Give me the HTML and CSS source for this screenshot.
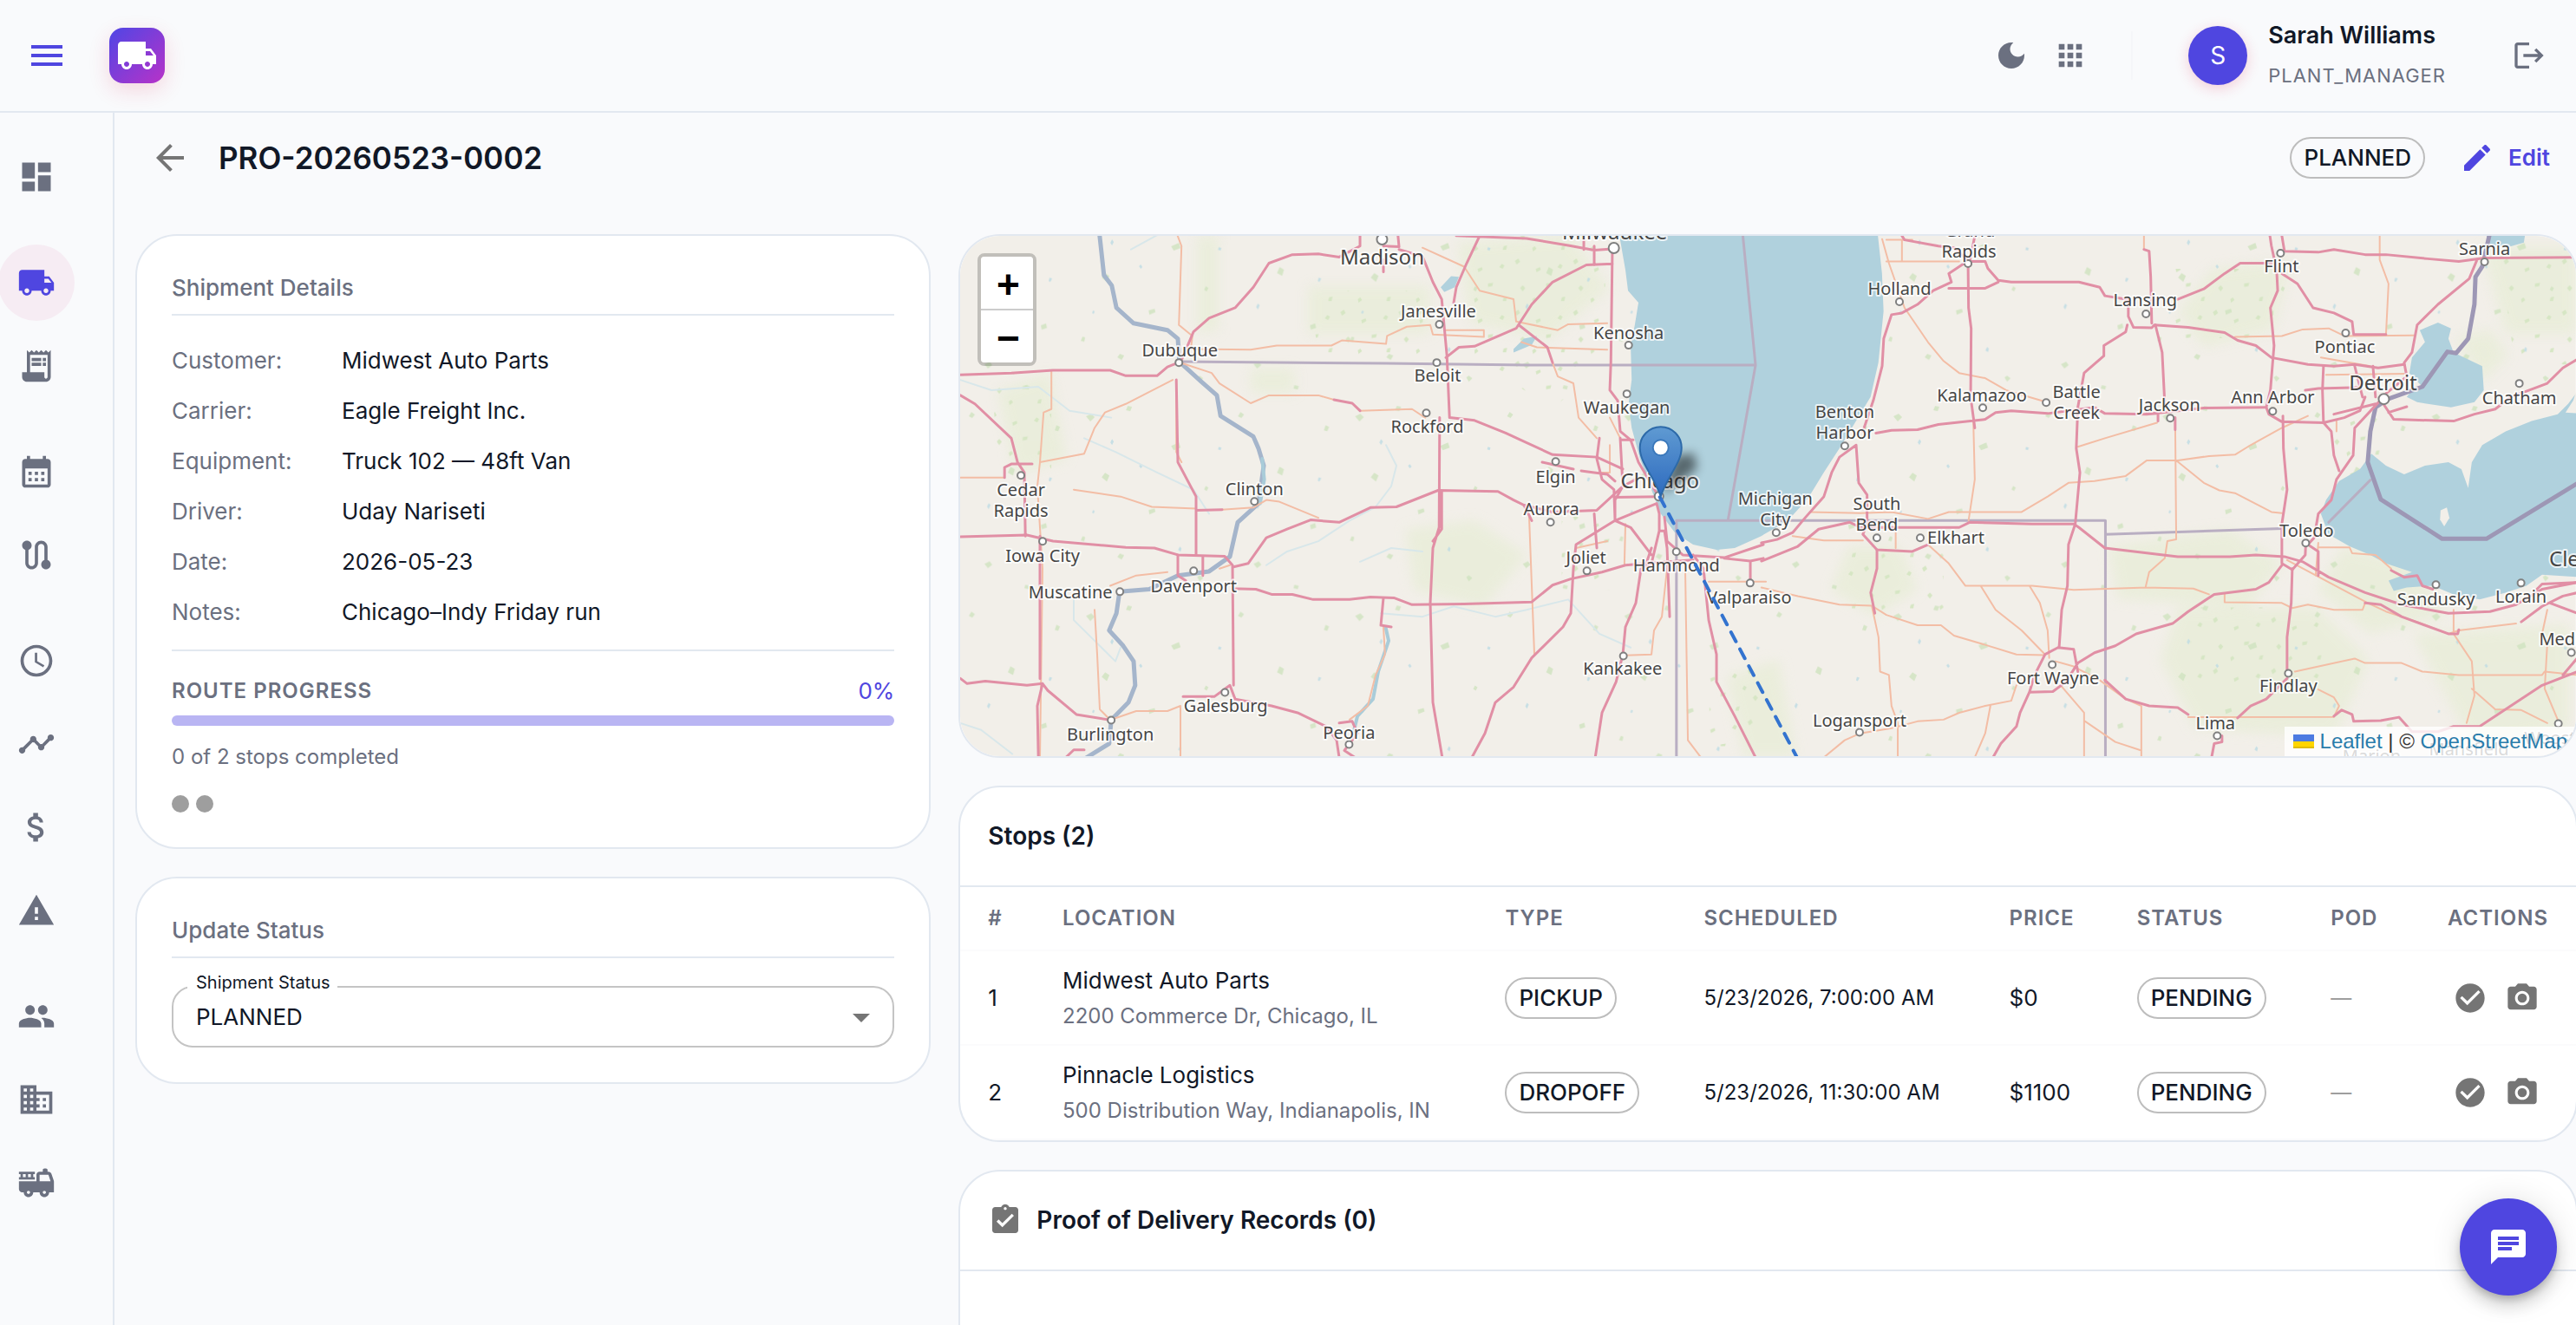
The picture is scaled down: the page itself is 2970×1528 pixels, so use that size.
FILE: index.html
```html
<!DOCTYPE html>
<html lang="en">
<head>
<meta charset="utf-8">
<title>PRO-20260523-0002</title>
<meta name="viewport" content="width=device-width, initial-scale=1">
<link rel="stylesheet" href="styles.css">
</head>
<body>
<svg class="sprite" aria-hidden="true">
  <symbol id="i-truck" viewBox="0 0 24 24"><path d="M20 8h-3V4H3c-1.100 0-2 .9-2 2v11h2c0 1.660 1.340 3 3 3s3-1.340 3-3h6c0 1.660 1.340 3 3 3s3-1.340 3-3h2v-5l-3-4zM6 18.500c-.83 0-1.500-.67-1.500-1.500s.67-1.500 1.500-1.500 1.500.67 1.500 1.500-.67 1.500-1.500 1.500zm13.500-9l1.960 2.500H17V9.500h2.500zm-1.500 9c-.83 0-1.500-.67-1.500-1.500s.67-1.500 1.500-1.500 1.500.67 1.500 1.500-.67 1.500-1.500 1.500z"/></symbol>
  <symbol id="i-check" viewBox="0 0 24 24"><path d="M12 2C6.480 2 2 6.480 2 12s4.480 10 10 10 10-4.480 10-10S17.520 2 12 2zm-2 15l-5-5 1.410-1.410L10 14.170l7.590-7.590L19 8l-9 9z"/></symbol>
  <symbol id="i-camera" viewBox="0 0 24 24"><path d="M9 2L7.170 4H4c-1.100 0-2 .9-2 2v12c0 1.100.9 2 2 2h16c1.100 0 2-.9 2-2V6c0-1.100-.9-2-2-2h-3.170L15 2H9zm3 15c-2.760 0-5-2.240-5-5s2.240-5 5-5 5 2.240 5 5-2.240 5-5 5z"/><circle cx="12" cy="12" r="3.200"/></symbol>
</svg>

<header class="topbar">
  <button class="icon-btn menu-btn" type="button" aria-label="Menu"><svg class="icon-lg" viewBox="0 0 24 24"><path d="M3 18h18v-2H3v2zm0-5h18v-2H3v2zm0-7v2h18V6H3z"/></svg></button>
  <a class="logo" href="#" aria-label="Home"><svg class="icon-lg"><use href="#i-truck"/></svg></a>
  <div class="topbar-tools">
    <button class="icon-btn tool-btn" type="button" aria-label="Dark mode"><svg class="icon" viewBox="0 0 24 24"><path d="M12 3c-4.970 0-9 4.030-9 9s4.030 9 9 9 9-4.030 9-9c0-.46-.04-.92-.1-1.360-.98 1.370-2.580 2.260-4.400 2.260-2.980 0-5.400-2.420-5.400-5.400 0-1.810.89-3.420 2.260-4.400-.44-.06-.9-.1-1.360-.1z"/></svg></button>
    <button class="icon-btn tool-btn" type="button" aria-label="Apps"><svg class="icon" viewBox="0 0 24 24"><path d="M4 8h4V4H4v4zm6 12h4v-4h-4v4zm-6 0h4v-4H4v4zm0-6h4v-4H4v4zm6 0h4v-4h-4v4zm6-10v4h4V4h-4zm-6 4h4V4h-4v4zm6 6h4v-4h-4v4zm0 6h4v-4h-4v4z"/></svg></button>
  </div>
  <span class="topbar-divider"></span>
  <div class="user">
    <span class="avatar">S</span>
    <div class="user-text">
      <span class="user-name">Sarah Williams</span>
      <span class="user-role">PLANT_MANAGER</span>
    </div>
  </div>
  <button class="icon-btn tool-btn" type="button" aria-label="Log out"><svg class="icon" viewBox="0 0 24 24"><path d="M17 7l-1.410 1.410L18.170 11H8v2h10.170l-2.580 2.580L17 17l5-5zM4 5h8V3H4c-1.100 0-2 .9-2 2v14c0 1.100.9 2 2 2h8v-2H4V5z"/></svg></button>
</header>

<div class="shell">
  <nav class="sidebar" aria-label="Main">
    <div class="nav-group">
      <a class="nav-item" href="#" aria-label="Dashboard"><svg viewBox="0 0 24 24"><path d="M3 13h8V3H3v10zm0 8h8v-6H3v6zm10 0h8V11h-8v10zm0-18v6h8V3h-8z"/></svg></a>
    </div>
    <div class="nav-group">
      <a class="nav-item active" href="#" aria-label="Shipments"><svg><use href="#i-truck"/></svg></a>
      <a class="nav-item" href="#" aria-label="Orders"><svg viewBox="0 0 24 24"><path d="M19.500 3.500L18 2l-1.500 1.500L15 2l-1.500 1.500L12 2l-1.500 1.500L9 2 7.500 3.500 6 2v14H3v3c0 1.660 1.340 3 3 3h12c1.660 0 3-1.340 3-3V2l-1.500 1.500zM19 19c0 .55-.45 1-1 1s-1-.45-1-1v-3H8V5h11v14z"/><path d="M9 7h6v2H9zm7 0h2v2h-2zM9 10h6v2H9zm7 0h2v2h-2z"/></svg></a>
    </div>
    <div class="nav-group">
      <a class="nav-item" href="#" aria-label="Calendar"><svg viewBox="0 0 24 24"><path d="M19 4h-1V2h-2v2H8V2H6v2H5c-1.110 0-1.990.9-1.990 2L3 20c0 1.100.89 2 2 2h14c1.100 0 2-.9 2-2V6c0-1.100-.9-2-2-2zm0 16H5V10h14v10zM9 14H7v-2h2v2zm4 0h-2v-2h2v2zm4 0h-2v-2h2v2zm-8 4H7v-2h2v2zm4 0h-2v-2h2v2zm4 0h-2v-2h2v2z"/></svg></a>
      <a class="nav-item" href="#" aria-label="Routes"><svg viewBox="0 0 24 24"><path d="M19 15.180V7c0-2.210-1.790-4-4-4s-4 1.790-4 4v10c0 1.100-.9 2-2 2s-2-.9-2-2V8.820C8.160 8.400 9 7.300 9 6c0-1.660-1.340-3-3-3S3 4.340 3 6c0 1.300.84 2.400 2 2.820V17c0 2.210 1.790 4 4 4s4-1.790 4-4V7c0-1.100.9-2 2-2s2 .9 2 2v8.180c-1.160.41-2 1.510-2 2.820 0 1.660 1.340 3 3 3s3-1.340 3-3c0-1.300-.84-2.400-2-2.820z"/></svg></a>
    </div>
    <div class="nav-group">
      <a class="nav-item" href="#" aria-label="Schedule"><svg viewBox="0 0 24 24"><path d="M11.990 2C6.470 2 2 6.480 2 12s4.470 10 9.990 10C17.520 22 22 17.520 22 12S17.520 2 11.990 2zM12 20c-4.420 0-8-3.580-8-8s3.580-8 8-8 8 3.580 8 8-3.580 8-8 8z"/><path d="M12.500 7H11v6l5.250 3.150.75-1.230-4.500-2.670z"/></svg></a>
      <a class="nav-item" href="#" aria-label="Analytics"><svg viewBox="0 0 24 24"><path d="M23 8c0 1.100-.9 2-2 2-.18 0-.35-.02-.51-.07l-3.560 3.550c.05.16.07.34.07.52 0 1.100-.9 2-2 2s-2-.9-2-2c0-.18.02-.36.07-.52l-2.550-2.550c-.16.05-.34.07-.52.07s-.36-.02-.52-.07l-4.550 4.560c.05.16.07.33.07.51 0 1.100-.9 2-2 2s-2-.9-2-2 .9-2 2-2c.18 0 .35.02.51.07l4.560-4.550C8.020 9.360 8 9.180 8 9c0-1.100.9-2 2-2s2 .9 2 2c0 .18-.02.36-.07.52l2.550 2.550c.16-.05.34-.07.52-.07s.36.02.52.07l3.550-3.560C19.020 8.350 19 8.180 19 8c0-1.100.9-2 2-2s2 .9 2 2z"/></svg></a>
      <a class="nav-item" href="#" aria-label="Billing"><svg viewBox="0 0 24 24"><path d="M11.800 10.900c-2.270-.59-3-1.200-3-2.150 0-1.090 1.010-1.850 2.700-1.850 1.780 0 2.440.85 2.500 2.100h2.210c-.07-1.720-1.120-3.300-3.210-3.810V3h-3v2.160c-1.940.42-3.500 1.680-3.500 3.610 0 2.310 1.910 3.460 4.700 4.130 2.500.6 3 1.480 3 2.410 0 .69-.49 1.790-2.700 1.790-2.060 0-2.870-.92-2.980-2.100h-2.200c.12 2.190 1.760 3.420 3.680 3.830V21h3v-2.150c1.950-.37 3.500-1.500 3.500-3.550 0-2.840-2.430-3.810-4.700-4.400z"/></svg></a>
      <a class="nav-item" href="#" aria-label="Alerts"><svg viewBox="0 0 24 24"><path d="M1 21h22L12 2 1 21zm12-3h-2v-2h2v2zm0-4h-2v-4h2v4z"/></svg></a>
    </div>
    <div class="nav-group">
      <a class="nav-item" href="#" aria-label="Users"><svg viewBox="0 0 24 24"><path d="M16 11c1.660 0 2.990-1.340 2.990-3S17.660 5 16 5c-1.660 0-3 1.340-3 3s1.340 3 3 3zm-8 0c1.660 0 2.990-1.340 2.990-3S9.660 5 8 5C6.340 5 5 6.340 5 8s1.340 3 3 3zm0 2c-2.330 0-7 1.170-7 3.500V19h14v-2.500c0-2.330-4.670-3.500-7-3.500zm8 0c-.29 0-.62.02-.97.05 1.160.84 1.970 1.970 1.970 3.450V19h6v-2.500c0-2.330-4.670-3.500-7-3.500z"/></svg></a>
      <a class="nav-item" href="#" aria-label="Companies"><svg viewBox="0 0 24 24"><path d="M12 7V3H2v18h20V7H12zM6 19H4v-2h2v2zm0-4H4v-2h2v2zm0-4H4V9h2v2zm0-4H4V5h2v2zm4 12H8v-2h2v2zm0-4H8v-2h2v2zm0-4H8V9h2v2zm0-4H8V5h2v2zm10 12h-8v-2h2v-2h-2v-2h2v-2h-2V9h8v10zm-2-8h-2v2h2v-2zm0 4h-2v2h2v-2z"/></svg></a>
      <a class="nav-item" href="#" aria-label="Fleet"><svg viewBox="0 0 24 24"><path d="m22.900 10.690-1.440-4.320C21.180 5.550 20.420 5 19.560 5H19V4c0-.55-.45-1-1-1h-1c-.55 0-1 .45-1 1v1h-2c-1.100 0-2 .9-2 2v4H1v5c0 1.100.9 2 2 2h1c0 1.660 1.340 3 3 3s3-1.340 3-3h4c0 1.660 1.340 3 3 3s3-1.340 3-3h3v-6.680c0-.22-.03-.43-.1-.63zM7 19c-.55 0-1-.45-1-1s.45-1 1-1 1 .45 1 1-.45 1-1 1zm10 0c-.55 0-1-.45-1-1s.45-1 1-1 1 .45 1 1-.45 1-1 1zm-3-8V7h5.560l1.330 4H14z"/><path d="M11 8.500h-1v-2h1V5H1v1.500h1v2H1V10h10V8.500zm-5.750 0H3.500v-2h1.750v2zm3.250 0H6.750v-2H8.500v2z"/></svg></a>
    </div>
  </nav>

  <main class="content">
    <div class="page-head">
      <button class="icon-btn back-btn" type="button" aria-label="Back"><svg class="icon-lg" viewBox="0 0 24 24"><path d="M20 11H7.830l5.590-5.590L12 4l-8 8 8 8 1.410-1.410L7.830 13H20v-2z"/></svg></button>
      <h1>PRO-20260523-0002</h1>
      <span class="chip">PLANNED</span>
      <button class="edit-btn" type="button"><svg class="icon" viewBox="0 0 24 24"><path d="M3 17.250V21h3.750L17.810 9.940l-3.750-3.750L3 17.250zM20.710 7.040c.39-.39.39-1.020 0-1.410l-2.340-2.340c-.39-.39-1.020-.39-1.410 0l-1.830 1.830 3.750 3.750 1.830-1.830z"/></svg>Edit</button>
    </div>

    <div class="columns">
      <div class="stack">
        <section class="card panel">
          <h2 class="panel-title">Shipment Details</h2>
          <dl class="details">
            <div><dt>Customer:</dt><dd>Midwest Auto Parts</dd></div>
            <div><dt>Carrier:</dt><dd>Eagle Freight Inc.</dd></div>
            <div><dt>Equipment:</dt><dd>Truck 102 — 48ft Van</dd></div>
            <div><dt>Driver:</dt><dd>Uday Nariseti</dd></div>
            <div><dt>Date:</dt><dd>2026-05-23</dd></div>
            <div><dt>Notes:</dt><dd>Chicago–Indy Friday run</dd></div>
          </dl>
          <div class="progress">
            <div class="progress-head"><span class="overline">ROUTE PROGRESS</span><span class="percent">0%</span></div>
            <div class="progress-track" role="progressbar" aria-valuenow="0" aria-valuemin="0" aria-valuemax="100" aria-label="Route progress"></div>
            <p class="progress-note">0 of 2 stops completed</p>
            <div class="dots"><span></span><span></span></div>
          </div>
        </section>

        <section class="card panel">
          <h2 class="panel-title">Update Status</h2>
          <div class="field">
            <label for="status">Shipment Status</label>
            <select id="status"><option>PLANNED</option></select>
            <svg class="field-arrow icon-lg" viewBox="0 0 24 24" aria-hidden="true"><path d="M7 10l5 5 5-5z"/></svg>
          </div>
        </section>
      </div>

      <div class="stack">
        <section class="card map" aria-label="Route map">
          <svg class="map-canvas" viewBox="1107 272 1861 600" preserveAspectRatio="xMinYMin slice">
            <defs>
              <pattern id="specks" width="310" height="230" patternUnits="userSpaceOnUse">
                <path fill="#cfe3bf" d="M12 20l6-3 4 4-5 5zM60 8l5 1-2 5-5-1zM110 54l9-4 2 6-8 3zM190 15l4 3-3 4-4-2zM30 90l4-5 5 3-3 7zM84 128l7-2 1 4-7 3zM235 78l5 3-2 7-6-3zM270 145l6-2 1 5-6 2zM48 182l3-4 5 2-3 5zM150 100l3 2-2 4-3-2zM8 158l3 1-1 5-4-1zM205 190l6-3 3 4-5 4zM140 205l3-2 4 3-4 4zM288 30l4 2-2 5-4-1zM252 214l5 1-1 4-5-1z"/>
                <path fill="#bcdbe4" d="M42 46l2 3-2 4-2-3zM165 55l3 1-1 3-3-1zM75 75l2 3-2 2-2-3zM210 120l2 2-2 5-2-3zM20 128l2 1-1 3-2-1zM120 170l2 2-1 4-3-2zM280 90l3 1-2 4-2-1z"/>
              </pattern>
              <pattern id="scrub" width="67" height="59" patternUnits="userSpaceOnUse">
                <path fill="#d6e6c4" d="M4 6l4-3 2 4-4 3zM28 15l5-2 1 3-5 3zM56 9l3 2-2 4-4-2zM10 37l3-3 3 3-3 4zM40 32l6-1-1 4-5 1zM24 50l3-2 2 3-4 3zM58 48l4-1-1 5-4 0z"/>
              </pattern>
              <linearGradient id="pin" x1="0" y1="0" x2="0" y2="1"><stop offset="0" stop-color="#5f9ad2"/><stop offset="1" stop-color="#2e6bbf"/></linearGradient>
              <filter id="soft" x="-50%" y="-50%" width="200%" height="200%"><feGaussianBlur stdDeviation="6"/></filter>
              <filter id="feather"><feGaussianBlur stdDeviation="7"/></filter>
            </defs>
            <rect x="1107" y="272" width="1861" height="600" fill="#f2efe9"/>
            <g filter="url(#feather)" fill="#e7edd6" opacity=".7">
              <path d="M1508 330h140v55h-140zM1442 425h50v28h-50zM1380 272h24v110h-24zM1150 450l60-20 20 100-60 15zM1680 280l130-8 45 60-70 60-90-20zM1620 610l80-10 60 40-50 60-80-20zM1990 780l60-20 20 112h-60z"/>
              <path d="M2510 360l40-50 90-10-20 80-80 20zM2430 630l140-20 60 40-40 50-150-10zM2510 700l160 0 60 60-40 90-160-10-40-80zM2700 630l80 20 40 60-90 20-60-50zM2860 285h108v100h-80zM2830 390l40-10 20 30-30 30zM2780 730l180-10v120l-110 20zM2130 630l60 0 20 50-50 30-50-30z"/>
            </g>
            <g fill="url(#scrub)">
              <path d="M1510 335h130v80h-120zM1690 272h160v140l-60 60-90-60zM1142 430h70v110h-60zM1800 590h60v90h-60zM2500 310h120v80h-120zM2520 700h160v90h-150zM2690 480h60v80h-60zM2880 290h88v130h-70zM2130 630h110v80h-110zM1970 770h60v90h-60z"/>
            </g>
            <rect x="1107" y="272" width="1861" height="600" fill="url(#specks)" opacity=".8"/>

            <!-- western half, lake and state lines -->
            <g transform="translate(1100 260) scale(.5995 .3954)" fill="none" stroke-linejoin="round" stroke-linecap="round">
              <path fill="#b0d1dd" d="M1275 0L1290 130 1295 190 1315 225 1308 290 1300 350 1302 450 1296 520 1302 590 1318 680 1340 770 1358 840 1385 895 1420 930 1465 945 1500 940 1551 905 1591 870 1611 845 1641 795 1671 720 1701 650 1725 590 1761 500 1776 400 1786 250 1783 140 1773 0z"/>
              <path fill="#b0d1dd" d="M935 180l20-32 15 2-8 30-20 14zM1075 360l20-30 25-8-10 26-35 22z"/>
              <g class="stream">
                <path d="M12 450l60 30 90-10 60 70 80 20M250 620l60 40 80 60 70 50 30 70M780 980l60-40 60 10M820 1130l80 10 60-30 80 30 60-20 80-30 60 100 60 40M830 640l20 60-10 60-30 60-50 40-60 60-60 30-40 40M230 1070v80l40 60 40 60 10-40M12 1450l40 20 60 70M340 70l60-50"/>
              </g>
              <path class="river" d="M279 20L288 145 303 175 312 240 345 285 410 305 430 330 433 397 475 455 505 495 512 555 575 615 585 650 595 700 585 810 545 865 530 965 490 1008 430 1020 375 1060 318 1067 312 1130 298 1180 325 1225 345 1270 348 1340 335 1390 302 1441 298 1510 250 1555"/>
              <path stroke="#a9ccd9" stroke-width="4" vector-effect="non-scaling-stroke" d="M829 1170l6 40-20 90-10 80-30 50-8 50M592 680l4 60-8 70"/>
              <path class="state" d="M1515 20L1540 407 1487 860M433 397L830 402 1100 407H1540M1388 950V860H2212M1388 950V1560"/>
              <g class="minor">
                <path d="M427 20L437 60 432 290 458 322 455 360 570 362 620 350 725 350 745 335 830 345 832 322 870 295 915 290 920 318 1018 325M1018 325V305H945M187 425V535L172 545 165 690 250 665 270 590 290 545 330 520 420 450M165 690L160 760 170 1000 165 1550M12 735H95M435 400L495 430 510 460 570 518 605 495 700 495 730 508M780 540L880 535 905 560M230 770L320 790 380 820 465 825M515 828L575 822 600 800 625 805 700 852M427 450V660L437 690M270 1120L275 1250 280 1410 300 1441M300 1441L350 1415 410 1415 435 1400V1550M900 65L980 120 1010 190 1075 215 1080 280 1160 305 1180 288 1255 285M1090 340L1120 355 1255 362M1150 400L1160 440 1190 460 1200 560 1235 620M1105 850L1115 1250M825 1170L828 1250 810 1310 795 1400 760 1440M1290 870L1288 990M1405 1010L1410 1500 1435 1550M1450 1038H1560M1290 1253L1340 1250 1345 1180 1360 1140 1370 1000M1230 720H1260V640M1195 940l60-20M1260 560l20 60M300 1050l50-30 60-10M510 1000l20-10"/>
              </g>
              <g class="major">
                <path d="M12 435L110 430 190 422 300 422 330 438 390 438 410 412 430 400M12 495L40 520 110 620 122 690 135 720 137 905M97 735V705L110 695H150M12 907L140 902 190 920 330 938 385 940 430 960 520 964 535 990 537 1340M535 1058L580 1060 610 1075 650 1075 690 1090 760 1090 800 1083 845 1085 880 1105 980 1103 1110 1097 1150 1048 1185 1030 1245 1010 1290 990 1330 985 1420 975"/>
                <path d="M537 995L565 985 600 910 640 885 685 858 740 865 800 822 850 820 930 772 1045 775 1075 800 1095 815 1110 860M427 450L430 690 465 790V960M465 830L515 828M478 965V1020M430 960V1020L445 1035M12 1320L25 1335 60 1328 140 1340 170 1335 180 1355 235 1425 300 1441M165 905L165 1320M170 1335L160 1400 162 1550M440 1373H500L530 1340 540 1380 610 1400 660 1420 715 1460 735 1500 740 1550M825 1085L820 1165 840 1170M740 1450L765 1445 775 1480 750 1530 770 1550M435 400L460 310 490 270 540 240 575 180 605 110 650 85 700 83 740 92 780 60 780 30M730 508L765 518 780 540"/>
                <path d="M853 30L855 62 825 60M825 100V135M855 70L900 90 920 165 937 215 947 380 952 560 1000 568 1060 605 1150 668 1235 675 1285 710M1010 30L985 110 965 180 960 225M945 385L970 355 1000 352 1080 300 1110 230 1150 165 1215 115 1265 112M965 30L1100 38 1180 58 1230 72 1265 68M1085 290L1140 355 1150 400M1265 60L1262 400 1260 480 1275 510 1280 600 1300 625 1315 690 1350 780M1230 60V115M1210 40V70M933 560L932 880 920 940 915 1100 920 1390 938 1550M937 775V885L920 920"/>
                <path d="M1240 620L1235 680 1245 740 1268 770 1270 860 1300 880 1340 960M1280 620L1285 760 1270 800V860M1285 760L1310 740M1268 792L1355 790M1095 815L1150 835 1235 830 1285 760M1270 860L1195 930 1190 1000 1185 1130 1170 1170 1110 1260 1075 1345 1040 1390 1020 1480 995 1550M1270 860L1350 810 1355 840V890L1340 985 1320 1000 1310 1100 1290 1170 1285 1250 1272 1330 1245 1420 1232 1550M1230 840L1235 940M1365 850L1370 920 1400 960 1480 968 1555 930M1355 890H1365L1370 940 1375 1140M1420 960L1440 1000 1450 1150 1465 1250V1330L1500 1430 1540 1550M1340 940L1330 985M1480 970L1530 978 1555 970M1530 978V1042M1280 625L1305 625M1205 715L1255 725 1270 745M1130 690L1190 710M215 1550L230 1528H250"/>
              </g>
            </g>

            <!-- eastern half -->
            <g transform="translate(2030 260) scale(.5995 .3954)" fill="none" stroke-linejoin="round" stroke-linecap="round">
              <path fill="#b0d1dd" d="M1172 665L1200 700 1235 725 1275 700 1320 690 1345 710 1358 765 1365 690 1385 640 1430 600 1480 570 1530 550 1550 520 1575 470V1025L1500 1018 1470 1050 1430 1070 1380 1090 1330 1075 1290 1050 1240 1055 1215 1065 1205 1035 1250 1010 1230 1000 1200 985 1170 960 1130 935 1090 900 1075 840 1085 800 1110 745 1150 710z"/>
              <path fill="#b0d1dd" d="M1265 305L1300 283 1325 300 1320 330 1330 370 1385 410 1388 480 1370 515 1325 530 1260 515 1240 500 1250 480 1270 470 1245 430 1250 385 1275 340zM1385 0H1470L1465 50 1430 65 1400 55z"/>
              <path fill="#f2efe9" d="M1305 830l12-8 5 30-10 25-8-20z"/>
              <path fill="#f2efe9" d="M1575 470L1568 470 1560 510 1545 545 1575 548z"/>
              <path class="state" d="M661 861V1560M661 900L1000 883M1090 865L1170 742"/>
              <path class="national" d="M1400 20L1385 120 1372 150 1370 230 1358 330 1335 372 1318 368 1270 470 1205 505 1180 530 1170 600 1165 690 1190 798 1308 913 1393 913 1575 745"/>
              <g class="minor">
                <path d="M232 40L245 110 275 240 320 340 350 395 380 430 430 445 470 480 548 515M240 42H290M270 42V105M240 105H380M735 30V70M1188 30V100L1205 170 1200 320M910 325L1000 322 1040 303 1090 300 1120 322 1255 320M608 645L660 620 760 575M407 560L410 740 398 860M93 835L190 838 250 835 320 855 360 835 500 835 550 790 590 750 640 745 700 730 740 685 800 685 860 672 910 668 940 640 1000 590 1050 555M795 560L797 915 780 920 775 970 745 1010 738 1055M797 685L850 750 880 772 910 780 980 835 1000 838M60 905L120 918 195 918M258 895V940M320 930L360 985 392 1050 520 1050 600 1062 740 1055 830 1058 860 1075M0 1055L70 1080 150 1105 212 1108 240 1135 300 1165 345 1165 370 1195 430 1222 490 1250 545 1252M212 1108L225 1200 228 1300 245 1310 250 1400 262 1450V1550M422 1052L450 1120 500 1180 545 1250M515 1050L535 1100 550 1180 553 1260"/>
                <path d="M120 1550L160 1500 190 1480 250 1465 300 1445 350 1440 380 1420 430 1400 480 1385 490 1340M440 1400L430 1480 410 1550M575 1340L620 1420V1550M622 1445L680 1505 730 1530M565 1270L600 1285 650 1325 700 1380 730 1400V1550M890 1075V1098L1000 1100 1020 1115 1050 1105 1100 1120H1155L1160 1100M1010 975L1165 1100 1200 1125 1260 1155 1320 1190 1340 1180 1450 1160M1070 938H1130L1135 955 1180 960 1210 1000M1025 1300L1140 1262 1160 1275 1230 1275 1270 1300 1340 1310 1500 1310 1505 1300 1568 1310M820 1433L1100 1432 1110 1400 1100 1375 1070 1352M1330 1120V1190L1365 1270 1370 1370 1355 1450M1365 1350L1410 1410 1460 1412 1510 1450M1510 1120L1500 1190 1510 1220 1505 1350 1530 1440M1070 925L1065 1020M1085 435L1235 432M1075 385L1170 410M1105 600V570"/>
              </g>
              <g class="major">
                <path d="M270 30L275 42 340 60 370 65 400 105 430 105 435 125 455 160 480 165 610 165 650 180 660 205 700 215M410 30L405 70 400 105M395 105L360 140 365 165 330 190 300 230 270 255 250 260 235 330 232 410 215 510 195 600M397 105L398 240 403 300 402 500 410 590M360 183H430L455 165M220 605L250 597 300 595 340 580 430 565 450 545 480 540 550 548 640 530 660 548 740 550 850 532 970 530M735 70L745 75 748 150 750 285M800 215L850 185 890 140 920 110 980 110M705 215V265L715 297 750 298 755 290 820 297 890 312 915 335 950 350 980 385 1050 405 1100 410 1140 405 1185 415 1235 405"/>
                <path d="M703 290L700 310 658 350V380L620 430 608 530 605 650 612 720 603 870 590 930 588 1050 577 1120 572 1230M757 290L770 370 775 520M795 560V595M740 548H762V570M977 30L980 60 990 130 992 190 978 240 985 350 978 480 970 530 975 550 1000 572 1080 575 1120 560 1150 540 1160 500M1000 30L1005 75 1070 78 1100 70 1160 85 1200 85 1280 97 1340 105 1390 95 1568 93M1000 140L1030 170 1060 240 1100 255 1135 280 1138 318H1200M1375 100L1360 155 1300 230 1260 290 1250 370 1235 400 1240 440 1200 490M1140 410L1155 500M1080 410L1078 480 1080 575 1095 600 1100 670 1110 715M1002 555L1003 650 1010 770 1000 870V985L1020 1003 1045 960 1046 926"/>
                <path d="M1195 500L1140 590 1137 670 1105 740 1095 800 1070 840 1062 910 1050 930 1070 950V1020M1195 520L1215 565 1330 570 1370 550 1410 535 1440 500 1510 460 1540 415 1568 390M1205 545L1240 528M1175 410L1180 500M1045 480L1070 475 1150 472M1180 520L1100 550M182 640L150 675 135 720 120 790 85 850 60 895 30 915 0 925M182 640L187 750 203 785V870L195 900 222 945 290 950 320 930M0 978L30 960 70 935 110 885 170 865 190 880 380 880 400 865 520 870 600 870 610 880 660 940 800 965 900 965 950 960 1005 965 1040 980 1090 1025 1160 1070 1230 1105 1320 1130 1400 1125 1450 1105 1500 1060 1568 1040"/>
                <path d="M222 945V1000L210 1070 218 1130M570 1230L600 1235 608 1300M570 1230L545 1250 525 1310 515 1360 560 1358 585 1330 608 1275 640 1245 680 1225 720 1190 790 1160 820 1125 870 1075 950 1060 975 1040 1000 990M515 1360L497 1420 490 1460 460 1510 445 1550M1020 1000L1018 1100 1010 1200V1300M1010 1320L970 1380 940 1400 915 1435M660 1325L700 1380 745 1400 800 1405 820 1425M885 1487V1505L870 1510 865 1550M1100 1430L1115 1412 1135 1425 1138 1445 1190 1443 1225 1433 1250 1475 1300 1475 1330 1460 1380 1460 1450 1390 1500 1340 1568 1300M1160 1100L1190 1105 1230 1140 1320 1190H1338L1340 1178M1210 1005L1235 1025 1260 1020 1270 1050 1290 1060M1460 1155L1500 1110 1540 1080 1568 1070M1515 1100L1568 1130M1490 1060L1500 1045 1568 1040M1568 1260L1540 1310"/>
              </g>
            </g>

            <g class="places">
              <circle cx="1659" cy="374" r="4"/><circle cx="1877" cy="398" r="4"/><circle cx="1359" cy="418" r="4"/><circle cx="1656" cy="418" r="4"/><circle cx="1875" cy="454" r="4"/><circle cx="1644" cy="476" r="4"/><circle cx="1793" cy="532" r="4"/><circle cx="1912" cy="572" r="5"/><circle cx="1177" cy="548" r="4"/><circle cx="1446" cy="578" r="4"/><circle cx="1787" cy="602" r="4"/><circle cx="1202" cy="624" r="4"/><circle cx="1376" cy="658" r="4"/><circle cx="1291" cy="682" r="4"/><circle cx="1829" cy="658" r="4"/><circle cx="1932" cy="636" r="4"/><circle cx="2017" cy="672" r="4"/><circle cx="1871" cy="756" r="4"/><circle cx="1412" cy="798" r="4"/><circle cx="1281" cy="830" r="4"/><circle cx="1555" cy="858" r="4"/><circle cx="1593" cy="276" r="6"/><circle cx="1860" cy="286" r="6"/>
              <circle cx="2268" cy="304" r="4"/><circle cx="2189" cy="348" r="4"/><circle cx="2473" cy="362" r="4"/><circle cx="2628" cy="292" r="4"/><circle cx="2863" cy="302" r="4"/><circle cx="2703" cy="384" r="4"/><circle cx="2747" cy="460" r="6"/><circle cx="2903" cy="442" r="4"/><circle cx="2619" cy="474" r="4"/><circle cx="2501" cy="482" r="4"/><circle cx="2358" cy="464" r="4"/><circle cx="2285" cy="470" r="4"/><circle cx="2126" cy="514" r="4"/><circle cx="2047" cy="614" r="4"/><circle cx="2163" cy="620" r="4"/><circle cx="2213" cy="620" r="4"/><circle cx="2657" cy="626" r="4"/><circle cx="2807" cy="674" r="4"/><circle cx="2905" cy="672" r="4"/><circle cx="2963" cy="752" r="4"/><circle cx="2365" cy="766" r="4"/><circle cx="2637" cy="776" r="4"/><circle cx="2143" cy="844" r="4"/><circle cx="2555" cy="848" r="4"/><circle cx="2948" cy="834" r="4"/>
            </g>
            <g class="labels">
              <text class="city" x="1593" y="305">Madison</text><text class="city" x="1861" y="276">Milwaukee</text><text class="city" x="1913" y="563">Chicago</text><text class="city" x="2746" y="450">Detroit</text><text class="city" x="2992" y="653">Cleveland</text>
              <text x="1658" y="366">Janesville</text><text x="1877" y="391">Kenosha</text><text x="1360" y="411">Dubuque</text><text x="1657" y="440">Beloit</text><text x="1875" y="477">Waukegan</text><text x="1645" y="499">Rockford</text><text x="1793" y="557">Elgin</text><text x="1177" y="572">Cedar</text><text x="1177" y="596">Rapids</text><text x="1446" y="571">Clinton</text><text x="1788" y="594">Aurora</text><text x="1202" y="648">Iowa City</text><text x="1376" y="683">Davenport</text><text x="1234" y="690">Muscatine</text><text x="1828" y="650">Joliet</text><text x="1932" y="659">Hammond</text><text x="1870" y="778">Kankakee</text><text x="1413" y="821">Galesburg</text><text x="1280" y="853">Burlington</text><text x="1555" y="851">Peoria</text><text x="2016" y="696">Valparaiso</text>
              <text x="2270" y="273">Grand</text><text x="2269" y="297">Rapids</text><text x="2189" y="340">Holland</text><text x="2472" y="353">Lansing</text><text x="2629" y="314">Flint</text><text x="2863" y="294">Sarnia</text><text x="2702" y="407">Pontiac</text><text x="2903" y="466">Chatham</text><text x="2619" y="465">Ann Arbor</text><text x="2500" y="474">Jackson</text><text x="2393" y="459">Battle</text><text x="2393" y="483">Creek</text><text x="2284" y="463">Kalamazoo</text><text x="2126" y="482">Benton</text><text x="2126" y="506">Harbor</text><text x="2046" y="582">Michigan</text><text x="2046" y="606">City</text><text x="2163" y="588">South</text><text x="2163" y="612">Bend</text><text x="2254" y="627">Elkhart</text><text x="2658" y="619">Toledo</text><text x="2807" y="698">Sandusky</text><text x="2905" y="695">Lorain</text><text x="2961" y="744">Medina</text><text x="2366" y="789">Fort Wayne</text><text x="2637" y="798">Findlay</text><text x="2143" y="837">Logansport</text><text x="2553" y="840">Lima</text><text x="2948" y="857">Wooster</text><text x="2845" y="870">Mansfield</text><text x="2733" y="878">Marion</text>
            </g>

            <path d="M1916 570l14-44 22-4 4 18z" fill="#000" opacity=".5" filter="url(#soft)"/>
            <path d="M1913 573L2071 873" fill="none" stroke="#3373cf" stroke-width="4" stroke-linecap="round" stroke-dasharray="12 10"/>
            <path d="M1914 572C1906 548 1890 534 1890 516A24 24 0 0 1 1938 516C1938 534 1922 548 1914 572z" fill="url(#pin)" stroke="#2d6aa9" stroke-width="2"/>
            <circle cx="1914" cy="516" r="9" fill="#fff" stroke="#3a78bb" stroke-width="2"/>
          </svg>
          <div class="map-zoom">
            <button type="button" aria-label="Zoom in">+</button>
            <button type="button" aria-label="Zoom out">−</button>
          </div>
          <div class="map-credit">
            <a href="#"><svg width="24" height="16" viewBox="0 0 24 16" aria-hidden="true"><path fill="#4c7be1" d="M0 0h24v8H0z"/><path fill="#ffd500" d="M0 8h24v6H0z"/><path fill="#e0bc00" d="M0 14h24v2H0z"/></svg> Leaflet</a> | © <a href="#">OpenStreetMap</a>
          </div>
        </section>

        <section class="card">
          <div class="card-head"><h2>Stops (2)</h2></div>
          <table class="stops">
            <colgroup><col class="c-num"><col class="c-loc"><col class="c-type"><col class="c-sched"><col class="c-price"><col class="c-status"><col class="c-pod"><col class="c-act"></colgroup>
            <thead>
              <tr><th>#</th><th>LOCATION</th><th>TYPE</th><th>SCHEDULED</th><th>PRICE</th><th>STATUS</th><th>POD</th><th class="right">ACTIONS</th></tr>
            </thead>
            <tbody>
              <tr>
                <td>1</td>
                <td><span class="loc-name">Midwest Auto Parts</span><span class="loc-addr">2200 Commerce Dr, Chicago, IL</span></td>
                <td><span class="chip">PICKUP</span></td>
                <td class="small">5/23/2026, 7:00:00 AM</td>
                <td>$0</td>
                <td><span class="chip">PENDING</span></td>
                <td class="none">—</td>
                <td class="right"><div class="actions"><button class="icon-btn row-btn" type="button" aria-label="Complete stop 1"><svg class="icon"><use href="#i-check"/></svg></button><button class="icon-btn row-btn" type="button" aria-label="Add photo for stop 1"><svg class="icon"><use href="#i-camera"/></svg></button></div></td>
              </tr>
              <tr>
                <td>2</td>
                <td><span class="loc-name">Pinnacle Logistics</span><span class="loc-addr">500 Distribution Way, Indianapolis, IN</span></td>
                <td><span class="chip">DROPOFF</span></td>
                <td class="small">5/23/2026, 11:30:00 AM</td>
                <td>$1100</td>
                <td><span class="chip">PENDING</span></td>
                <td class="none">—</td>
                <td class="right"><div class="actions"><button class="icon-btn row-btn" type="button" aria-label="Complete stop 2"><svg class="icon"><use href="#i-check"/></svg></button><button class="icon-btn row-btn" type="button" aria-label="Add photo for stop 2"><svg class="icon"><use href="#i-camera"/></svg></button></div></td>
              </tr>
            </tbody>
          </table>
        </section>

        <section class="card">
          <div class="card-head"><svg class="icon head-icon" viewBox="0 0 24 24" aria-hidden="true"><path d="M19 3h-4.180C14.400 1.840 13.300 1 12 1c-1.300 0-2.400.84-2.820 2H5c-1.100 0-2 .9-2 2v14c0 1.100.9 2 2 2h14c1.100 0 2-.9 2-2V5c0-1.100-.9-2-2-2zm-7 0c.55 0 1 .45 1 1s-.45 1-1 1-1-.45-1-1 .45-1 1-1zm-2 14l-4-4 1.410-1.410L10 14.170l6.590-6.590L18 9l-8 8z"/></svg><h2>Proof of Delivery Records (0)</h2></div>
          <div class="empty"></div>
        </section>
      </div>
    </div>
  </main>
</div>

<button class="fab" type="button" aria-label="Chat"><svg class="icon-lg" viewBox="0 0 24 24"><path d="M20 2H4c-1.100 0-1.990.9-1.990 2L2 22l4-4h14c1.100 0 2-.9 2-2V4c0-1.100-.9-2-2-2zM6 9h12v2H6V9zm8 5H6v-2h8v2zm4-6H6V6h12v2z"/></svg></button>
</body>
</html>
```
FILE: styles.css
```css
:root {
  --bg: #f9fafc;
  --line: #e2e8f0;
  --ink: #111827;
  --muted: #6b7080;
  --grey: #757575;
  --primary: #4f46e0;
}

* {
  box-sizing: border-box;
}

html,
body {
  height: 100%;
}

body {
  margin: 0;
  display: flex;
  flex-direction: column;
  overflow: hidden;
  background: var(--bg);
  color: var(--ink);
  font: 400 26px/42px Inter, "Liberation Sans", sans-serif;
}

h1,
h2,
p,
dl,
dd {
  margin: 0;
}

button {
  font: inherit;
  color: inherit;
  background: none;
  border: 0;
  padding: 0;
}

svg {
  display: block;
  fill: currentColor;
}

.sprite {
  position: absolute;
  width: 0;
  height: 0;
}

.icon {
  width: 40px;
  height: 40px;
  flex: none;
}

.icon-lg {
  width: 48px;
  height: 48px;
  flex: none;
}

.icon-btn {
  display: flex;
  align-items: center;
  justify-content: center;
  border-radius: 50%;
}

/* Top bar */
.topbar {
  flex: none;
  display: flex;
  align-items: center;
  height: 130px;
  padding: 0 20px 0 14px;
  border-bottom: 2px solid var(--line);
  color: var(--muted);
}

.menu-btn {
  width: 80px;
  height: 80px;
  color: var(--primary);
}

.logo {
  display: flex;
  align-items: center;
  justify-content: center;
  width: 64px;
  height: 64px;
  margin-left: 32px;
  border-radius: 16px;
  background: linear-gradient(135deg, #4f46e5, #b832c8);
  box-shadow: 0 8px 24px rgba(225, 29, 72, 0.16);
  color: #fff;
}

.topbar-tools {
  display: flex;
  margin-left: auto;
}

.tool-btn {
  width: 68px;
  height: 68px;
}

.topbar-divider {
  width: 2px;
  height: 56px;
  margin: 0 64px 0 36px;
  background: #f5f6f9;
}

.user {
  display: flex;
  align-items: center;
  gap: 24px;
  margin-right: 62px;
}

.avatar {
  display: flex;
  align-items: center;
  justify-content: center;
  width: 68px;
  height: 68px;
  border-radius: 50%;
  background: var(--primary);
  box-shadow: 0 4px 16px rgba(225, 29, 72, 0.2);
  color: #fff;
  font-size: 28px;
}

.user-text {
  display: flex;
  flex-direction: column;
}

.user-name {
  font-size: 27px;
  font-weight: 600;
  line-height: 46px;
  color: var(--ink);
}

.user-role {
  font-size: 22px;
  line-height: 46px;
  letter-spacing: 1px;
}

/* Shell */
.shell {
  flex: 1;
  min-height: 0;
  display: flex;
}

.sidebar {
  flex: none;
  width: 132px;
  padding-top: 30px;
  border-right: 2px solid var(--line);
  display: flex;
  flex-direction: column;
  gap: 34px;
  color: var(--muted);
  overflow: hidden;
}

.nav-group {
  display: flex;
  flex-direction: column;
  gap: 8px;
  margin-left: -2px;
}

.nav-item {
  display: flex;
  align-items: center;
  justify-content: center;
  width: 88px;
  height: 88px;
  border-radius: 50%;
  color: inherit;
}

.nav-item svg {
  width: 44px;
  height: 44px;
}

.nav-item.active {
  background: #f6ecf3;
  color: var(--primary);
}

.content {
  flex: 1;
  min-width: 0;
  padding: 12px 0 0 24px;
  overflow: hidden;
}

.page-head {
  display: flex;
  align-items: center;
  gap: 16px;
  height: 80px;
  margin-bottom: 48px;
}

.page-head h1 {
  flex: 1;
  font-size: 35px;
  font-weight: 600;
  line-height: 48px;
}

.back-btn {
  width: 80px;
  height: 80px;
  color: var(--grey);
}

.edit-btn {
  display: flex;
  align-items: center;
  gap: 16px;
  padding: 12px 30px 12px 24px;
  color: var(--primary);
  font-weight: 600;
}

.chip {
  display: inline-block;
  height: 48px;
  padding: 0 14px;
  border: 2px solid #bdbdbd;
  border-radius: 24px;
  font-weight: 500;
  line-height: 44px;
  white-space: nowrap;
  vertical-align: middle;
}

.columns {
  display: grid;
  grid-template-columns: calc((100% - 64px) / 3) 1fr;
  gap: 32px;
  align-items: start;
  margin-right: -2px;
}

.stack {
  min-width: 0;
  display: flex;
  flex-direction: column;
  gap: 32px;
}

.card {
  background: #fff;
  border: 2px solid var(--line);
  border-radius: 48px;
  overflow: hidden;
}

.panel {
  padding: 40px;
}

.panel-title {
  padding-bottom: 10px;
  border-bottom: 2px solid var(--line);
  color: var(--muted);
  font-size: 26px;
  font-weight: 500;
  line-height: 40px;
}

/* Shipment details */
.details {
  display: flex;
  flex-direction: column;
  gap: 16px;
  padding: 31px 0 22px;
  border-bottom: 2px solid var(--line);
}

.details > div {
  display: grid;
  grid-template-columns: 180px 1fr;
  gap: 16px;
}

.details dt {
  color: var(--muted);
}

.progress {
  padding-top: 25px;
}

.progress-head {
  display: flex;
  justify-content: space-between;
}

.overline {
  color: var(--muted);
  font-size: 24px;
  font-weight: 600;
  letter-spacing: 1px;
}

.percent {
  color: var(--primary);
}

.progress-track {
  height: 12px;
  margin-top: 7px;
  border-radius: 6px;
  background: #b9b5f3;
}

.progress-note {
  margin-top: 17px;
  color: var(--muted);
  font-size: 24px;
  line-height: 38px;
}

.dots {
  display: flex;
  gap: 8px;
  margin-top: 25px;
}

.dots span {
  width: 20px;
  height: 20px;
  border-radius: 50%;
  background: #9e9e9e;
}

/* Status field */
.field {
  position: relative;
  margin-top: 32px;
}

.field label {
  position: absolute;
  top: -16px;
  left: 18px;
  padding: 0 8px 0 10px;
  background: #fff;
  font-size: 20px;
  line-height: 24px;
}

.field select {
  display: block;
  width: 100%;
  height: 71px;
  padding: 0 64px 0 26px;
  appearance: none;
  background: transparent;
  border: 2px solid #c4c4c4;
  border-radius: 24px;
  color: var(--ink);
  font: inherit;
}

.field-arrow {
  position: absolute;
  top: 12px;
  right: 14px;
  color: var(--grey);
  pointer-events: none;
}

/* Map */
.map {
  position: relative;
}

.map-canvas {
  width: 100%;
  height: 600px;
}

.stream path {
  stroke: #d8e7ea;
  stroke-width: 2;
  vector-effect: non-scaling-stroke;
}

.river {
  stroke: #a5b5cb;
  stroke-width: 5;
  vector-effect: non-scaling-stroke;
}

.state {
  stroke: #b9aec2;
  stroke-width: 3;
  vector-effect: non-scaling-stroke;
}

.national {
  stroke: #9d97b5;
  stroke-width: 5;
  vector-effect: non-scaling-stroke;
}

.minor path {
  stroke: #f3bda5;
  stroke-width: 2;
  vector-effect: non-scaling-stroke;
}

.major path {
  stroke: #e18fa5;
  stroke-width: 3;
  vector-effect: non-scaling-stroke;
}

.places circle {
  fill: #fff;
  stroke: #808080;
  stroke-width: 2;
}

.labels text {
  fill: #454545;
  stroke: rgba(255, 255, 255, 0.75);
  stroke-width: 4px;
  stroke-linejoin: round;
  paint-order: stroke;
  font-family: "Noto Sans", sans-serif;
  font-size: 20px;
  text-anchor: middle;
}

.labels .city {
  font-size: 24px;
}

.map-zoom {
  position: absolute;
  top: 20px;
  left: 20px;
  border: 4px solid rgba(0, 0, 0, 0.2);
  border-radius: 8px;
  background-clip: padding-box;
}

.map-zoom button {
  display: block;
  width: 60px;
  height: 60px;
  padding: 4px 0 0 2px;
  background: #fff;
  color: #000;
  font: bold 46px/56px "Liberation Sans", sans-serif;
}

.map-zoom button:first-child {
  height: 62px;
  border-bottom: 2px solid #ccc;
  border-radius: 4px 4px 0 0;
}

.map-zoom button:last-child {
  border-radius: 0 0 4px 4px;
}

.map-credit {
  position: absolute;
  right: 0;
  bottom: 0;
  padding: 0 10px;
  background: rgba(255, 255, 255, 0.8);
  color: #333;
  font: 24px/34px "Liberation Sans", sans-serif;
}

.map-credit a {
  color: #2a7cab;
  text-decoration: none;
}

.map-credit svg {
  display: inline-block;
}

/* Stops and records */
.card-head {
  display: flex;
  align-items: center;
  gap: 16px;
  padding: 35px 32px 36px;
  border-bottom: 2px solid var(--line);
}

.card-head h2 {
  font-size: 28px;
  font-weight: 600;
  line-height: 42px;
}

.head-icon {
  color: var(--grey);
}

.stops {
  width: 100%;
  table-layout: fixed;
  border-collapse: separate;
  border-spacing: 0;
}

.c-num { width: 4.6%; }
.c-loc { width: 27.4%; }
.c-type { width: 12.3%; }
.c-sched { width: 18.9%; }
.c-price { width: 7.9%; }
.c-status { width: 12%; }
.c-pod { width: 7.3%; }
.c-act { width: 9.6%; }

.stops th,
.stops td {
  padding: 12px 32px;
  border-bottom: 2px solid #fbfbfc;
  text-align: left;
  vertical-align: middle;
  white-space: nowrap;
}

.stops th {
  padding: 16px 32px;
  color: var(--muted);
  font-size: 24px;
  font-weight: 600;
  line-height: 40px;
  letter-spacing: 1px;
}

.stops .right {
  padding-left: 0;
  text-align: right;
}

.stops .small {
  font-size: 24px;
}

.stops .none {
  color: #9e9e9e;
  font-size: 24px;
}

.loc-name,
.loc-addr {
  display: block;
}

.loc-name {
  line-height: 43px;
}

.loc-addr {
  color: var(--muted);
  font-size: 24px;
  line-height: 40px;
}

.actions {
  display: flex;
  justify-content: flex-end;
}

.row-btn {
  width: 60px;
  height: 60px;
  color: var(--grey);
}

.empty {
  height: 160px;
}

.fab {
  position: fixed;
  right: 22px;
  bottom: 34px;
  display: flex;
  align-items: center;
  justify-content: center;
  width: 112px;
  height: 112px;
  border-radius: 50%;
  background: var(--primary);
  color: #fff;
  box-shadow: 0 6px 10px -2px rgba(0, 0, 0, 0.2), 0 12px 20px rgba(0, 0, 0, 0.14), 0 2px 36px rgba(0, 0, 0, 0.12);
}
```
